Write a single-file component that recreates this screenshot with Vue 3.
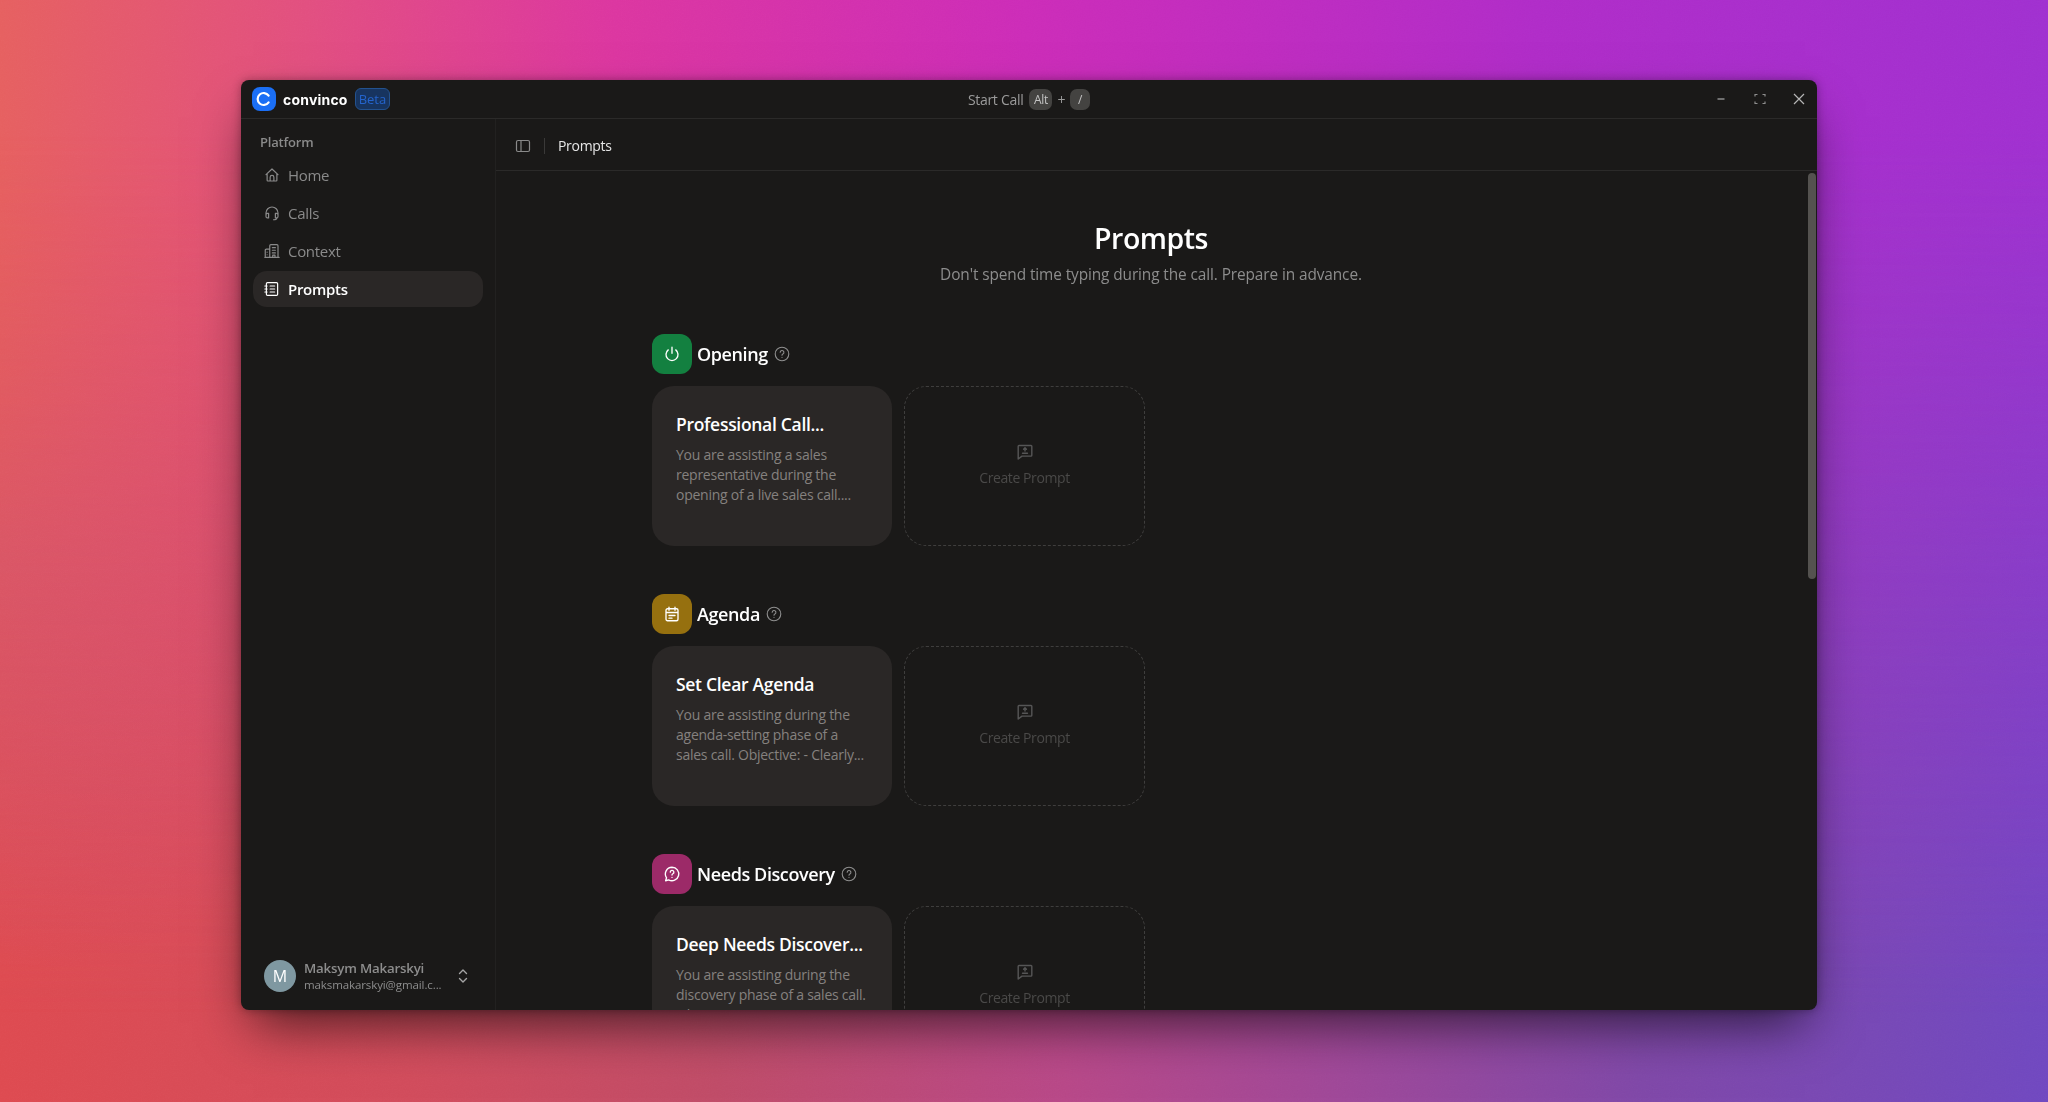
<template>
  <div class="desktop">
    <svg class="grain" width="2048" height="1102" aria-hidden="true">
      <filter id="grain-noise"><feTurbulence type="fractalNoise" baseFrequency="0.75" numOctaves="2" /><feColorMatrix type="saturate" values="0" /></filter>
      <rect width="2048" height="1102" filter="url(#grain-noise)" />
    </svg>
    <div class="window">
      <header class="titlebar">
        <div class="brand">
          <span class="logo">
            <svg width="16" height="16" viewBox="0 0 16 16" fill="none" stroke="#fff" stroke-width="2.2" stroke-linecap="round"><path d="M12.6 4.6A6 6 0 1 0 12.6 11.4" /></svg>
          </span>
          <span class="brand-name">convinco</span>
          <span class="beta">Beta</span>
        </div>
        <div class="start-call">
          <span>Start Call</span>
          <kbd class="alt">Alt</kbd>
          <span class="plus">+</span>
          <kbd class="slash">/</kbd>
        </div>
        <div class="controls">
          <svg width="12" height="12" viewBox="0 0 12 12" fill="none" stroke="#8d8d8d" stroke-width="1.3"><path d="M2.5 6h7" /></svg>
          <svg width="12" height="12" viewBox="0 0 12 12" fill="none" stroke="#8d8d8d" stroke-width="1.2"><path d="M1 3.5V1.5h2.5M8.5 1.5H11v2M11 8.5v2H8.500M3.500 10.500H1v-2" /></svg>
          <svg width="12" height="12" viewBox="0 0 12 12" fill="none" stroke="#b5b5b5" stroke-width="1.2"><path d="M1 1l10 10M11 1L1 11" /></svg>
        </div>
      </header>

      <div class="body">
        <aside class="sidebar">
          <div class="side-label">Platform</div>
          <nav class="nav">
            <a v-for="item in navItems" :key="item.name" class="nav-item" :class="{ active: item.active }">
              <svg width="18" height="18" viewBox="0 0 24 24" fill="none" stroke="currentColor" stroke-width="1.6" stroke-linecap="round" stroke-linejoin="round"><path :d="item.icon" /></svg>
              <span>{{ item.name }}</span>
            </a>
          </nav>
          <div class="user">
            <span class="avatar">M</span>
            <div class="user-text">
              <div class="user-name">Maksym Makarskyi</div>
              <div class="user-mail">maksmakarskyi@gmail.c...</div>
            </div>
            <svg width="14" height="16" viewBox="0 0 14 16" fill="none" stroke="#a5a5a5" stroke-width="1.4" stroke-linecap="round" stroke-linejoin="round"><path d="M3.500 5.500L7 2l3.500 3.500M3.500 10.500L7 14l3.500-3.500" /></svg>
          </div>
        </aside>

        <main class="main">
          <div class="crumbs">
            <svg width="16" height="16" viewBox="0 0 16 16" fill="none" stroke="#8a8a8a" stroke-width="1.2"><rect x="1.500" y="2.500" width="13" height="11" rx="1.500" /><path d="M6 2.500v11" /></svg>
            <span class="divider"></span>
            <span class="crumb">Prompts</span>
          </div>
          <div class="content">
            <h1>Prompts</h1>
            <p class="lead">Don't spend time typing during the call. Prepare in advance.</p>
            <section v-for="sec in sections" :key="sec.name" class="section">
              <div class="sec-head">
                <span class="sec-icon" :class="sec.tone">
                  <svg width="18" height="18" viewBox="0 0 24 24" fill="none" stroke="#fff" stroke-width="1.800" stroke-linecap="round" stroke-linejoin="round"><path :d="sec.icon" /></svg>
                </span>
                <span class="sec-name">{{ sec.name }}</span>
                <svg class="help" width="16" height="16" viewBox="0 0 16 16" fill="none" stroke="#8f8f8f" stroke-width="1.100" stroke-linecap="round"><circle cx="8" cy="8" r="6.800" /><path d="M6.200 6.300a1.850 1.850 0 1 1 2.700 1.650c-.6.300-.9.650-.9 1.250" /><path d="M8 11.300v.05" /></svg>
              </div>
              <div class="cards">
                <article class="card">
                  <h3>{{ sec.card }}</h3>
                  <p>{{ sec.text }}</p>
                </article>
                <button class="create">
                  <svg width="18" height="18" viewBox="0 0 18 18" fill="none" stroke="#565656" stroke-width="1.400" stroke-linecap="round" stroke-linejoin="round"><path d="M3 2.500h12a.8.8 0 0 1 .8.8v9a.8.8 0 0 1-.8.8H6L2.200 16V3.300a.8.8 0 0 1 .8-.8z" /><path d="M6.500 10.200h5M9 8V5M7.600 6.200L9 4.800l1.400 1.400" /></svg>
                  <span>Create Prompt</span>
                </button>
              </div>
            </section>
          </div>
          <div class="scroll-thumb"></div>
        </main>
      </div>
    </div>
  </div>
</template>

<script setup>
const navItems = [
  { name: 'Home', icon: 'M4 11.500L12 4l8 7.500M5.500 10v9a1 1 0 0 0 1 1h11a1 1 0 0 0 1-1v-9M9.500 20v-5a2.500 2.500 0 0 1 5 0v5' },
  { name: 'Calls', icon: 'M4 15v-3a8 8 0 0 1 16 0v3M4 14.500a2 2 0 0 1 2-2h1.500v6H6a2 2 0 0 1-2-2zM20 14.500a2 2 0 0 0-2-2h-1.500v6H18a2 2 0 0 0 2-2zM18.500 18.500c0 1.800-2 2.500-4.500 2.500' },
  { name: 'Context', icon: 'M9 20V5a1.500 1.500 0 0 1 1.500-1.500h8A1.500 1.500 0 0 1 20 5v15M3 20v-9a1.500 1.500 0 0 1 1.500-1.500H9M2.500 20.500h19M12.500 7.500h4M12.500 11h4M12.500 14.500h4M13 20v-2.500h3V20M5.500 13.500v.01M5.500 17v.01' },
  { name: 'Prompts', active: true, icon: 'M6 3.500h12a1.500 1.500 0 0 1 1.500 1.500v14a1.500 1.500 0 0 1-1.500 1.500H6A1.500 1.500 0 0 1 4.500 19V5A1.500 1.500 0 0 1 6 3.500zM2.500 8h3M2.500 12h3M2.500 16h3M9.500 8h6M9.500 12h6M9.500 16h6' },
]

const sections = [
  {
    name: 'Opening',
    tone: 'green',
    icon: 'M12 3v8M7 6.500a8 8 0 1 0 10 0',
    card: 'Professional Call...',
    text: 'You are assisting a sales representative during the opening of a live sales call....',
  },
  {
    name: 'Agenda',
    tone: 'gold',
    icon: 'M6 5h12a2 2 0 0 1 2 2v12a2 2 0 0 1-2 2H6a2 2 0 0 1-2-2V7a2 2 0 0 1 2-2zM8 3v4M16 3v4M4 10h16M8 14h8M8 17.500h4',
    card: 'Set Clear Agenda',
    text: 'You are assisting during the agenda-setting phase of a sales call. Objective: - Clearly...',
  },
  {
    name: 'Needs Discovery',
    tone: 'berry',
    icon: 'M12 3a9 9 0 1 1-4.500 16.800L3.500 21l1.200-4A9 9 0 0 1 12 3zM9.700 9.500a2.400 2.400 0 1 1 3.500 2.200c-.8.400-1.200.9-1.200 1.700M12 16.500v.01',
    card: 'Deep Needs Discover...',
    text: 'You are assisting during the discovery phase of a sales call. Objective: - Uncover...',
  },
]
</script>

<style>
html,
body {
  margin: 0;
  height: 100%;
  overflow: hidden;
}
</style>

<style scoped>
.desktop {
  position: relative;
  box-sizing: border-box;
  width: 2048px;
  height: 1102px;
  padding: 80px 231px 92px 241px;
  overflow: hidden;
  font-family: "Open Sans", "Noto Sans", sans-serif;
  background:
    radial-gradient(420px 420px at 0% 50%, rgba(200, 76, 116, 0.75) 0%, rgba(200, 76, 116, 0) 100%),
    linear-gradient(90deg, #de4a50 0%, #d24c5c 20%, #c04c68 35%, #b84888 52%, #a04898 65%, #8048a8 80%, #7048c0 100%);
}

/* top row of the wallpaper, faded out downwards over the bottom row */
.desktop::before {
  content: "";
  position: absolute;
  inset: 0;
  background: linear-gradient(90deg, #e66060 0%, #e24f80 15%, #dc36a0 30%, #cc2cb8 50%, #b02cc8 75%, #a030d0 100%);
  -webkit-mask-image: linear-gradient(180deg, #000 0%, #000 12%, transparent 92%);
  mask-image: linear-gradient(180deg, #000 0%, #000 12%, transparent 92%);
}

.grain {
  position: absolute;
  top: 0;
  left: 0;
  opacity: 0.1;
  mix-blend-mode: soft-light;
}

.window {
  position: relative;
  display: flex;
  flex-direction: column;
  height: 100%;
  border-radius: 8px;
  overflow: hidden;
  background: #1a1918;
  box-shadow: 0 25px 50px -12px rgba(0, 0, 0, 0.65), 0 0 10px rgba(0, 0, 0, 0.3);
}

.titlebar {
  display: grid;
  grid-template-columns: 1fr auto 1fr;
  align-items: center;
  height: 38px;
  flex: none;
  padding: 0 11px;
  border-bottom: 1px solid #2b2a29;
}

.brand {
  display: flex;
  align-items: center;
}

.logo {
  display: flex;
  align-items: center;
  justify-content: center;
  width: 24px;
  height: 24px;
  border-radius: 8px;
  background: #1b6ff5;
}

.brand-name {
  margin-left: 7px;
  font-family: Inter, sans-serif;
  font-size: 14px;
  font-weight: 700;
  letter-spacing: 0.2px;
  color: #fff;
}

.beta {
  margin-left: 7px;
  padding: 0 3px;
  height: 20px;
  line-height: 21px;
  font-size: 13px;
  color: #2464cc;
  background: #17345f;
  border: 1px solid #23528f;
  border-radius: 6px;
}

.start-call {
  display: flex;
  align-items: center;
  font-size: 14px;
  letter-spacing: -0.3px;
  color: #9b9b9b;
}

kbd {
  display: flex;
  align-items: center;
  justify-content: center;
  height: 21px;
  border-radius: 7px;
  background: #444341;
  color: #c4c4c4;
  font-family: inherit;
  font-size: 12px;
}

.alt {
  width: 23px;
  margin-left: 6px;
}

.plus {
  margin: 0 5px;
}

.slash {
  width: 20px;
}

.controls {
  display: flex;
  justify-content: flex-end;
  gap: 27px;
  padding-right: 1px;
}

.body {
  display: flex;
  flex: 1;
  min-height: 0;
}

.sidebar {
  display: flex;
  flex-direction: column;
  width: 255px;
  flex: none;
  box-sizing: border-box;
  padding: 14px 12px 18px;
  border-right: 1px solid #222120;
}

.side-label {
  padding-left: 7px;
  font-size: 13px;
  font-weight: 600;
  letter-spacing: -0.2px;
  color: #8a8a8a;
}

.nav {
  display: flex;
  flex-direction: column;
  gap: 2px;
  margin-top: 6px;
}

.nav-item {
  display: flex;
  align-items: center;
  gap: 7px;
  height: 36px;
  padding-left: 10px;
  border-radius: 14px;
  font-size: 15px;
  letter-spacing: -0.3px;
  color: #8a8a8a;
}

.nav-item.active {
  background: #2a2726;
  color: #fff;
  font-weight: 600;
}

.user {
  display: flex;
  align-items: center;
  margin-top: auto;
  padding-left: 11px;
}

.avatar {
  display: flex;
  align-items: center;
  justify-content: center;
  width: 32px;
  height: 32px;
  flex: none;
  border-radius: 50%;
  background: #7f98a1;
  color: #fff;
  font-size: 16px;
}

.user-text {
  width: 149px;
  margin-left: 8px;
  margin-right: 3px;
}

.user-name {
  font-size: 13.3px;
  line-height: 17px;
  font-weight: 600;
  letter-spacing: -0.2px;
  color: #8d8d8d;
}

.user-mail {
  font-size: 11.5px;
  line-height: 15px;
  letter-spacing: -0.1px;
  white-space: nowrap;
  color: #8d8d8d;
}

.main {
  position: relative;
  flex: 1;
  min-width: 0;
  overflow: hidden;
}

.crumbs {
  display: flex;
  align-items: center;
  gap: 13px;
  box-sizing: content-box;
  height: 49px;
  padding: 2px 0 0 19px;
  border-bottom: 1px solid #2b2a29;
}

.divider {
  width: 1px;
  height: 16px;
  background: #3a3938;
}

.crumb {
  font-size: 14px;
  letter-spacing: -0.3px;
  color: #e6e6e6;
}

.content {
  box-sizing: border-box;
  width: 998px;
  margin-left: 156px;
  padding-top: 47px;
}

h1 {
  margin: 0;
  text-align: center;
  font-size: 28.5px;
  line-height: 40px;
  font-weight: 600;
  letter-spacing: -0.5px;
  color: #fff;
}

.lead {
  margin: 6px 0 0;
  text-align: center;
  font-size: 15.4px;
  line-height: 22px;
  letter-spacing: -0.1px;
  color: #8d8d8d;
}

.section {
  margin-bottom: 48px;
}

.lead + .section {
  margin-top: 48px;
}

.sec-head {
  display: flex;
  align-items: center;
  height: 40px;
}

.sec-icon {
  display: flex;
  align-items: center;
  justify-content: center;
  width: 40px;
  height: 40px;
  border-radius: 12px;
}

.green {
  background: #138040;
}

.gold {
  background: #96700f;
}

.berry {
  background: #9c2a68;
}

.sec-name {
  margin-left: 5px;
  font-size: 18px;
  font-weight: 600;
  letter-spacing: -0.4px;
  color: #fff;
}

.help {
  margin-left: 6px;
}

.cards {
  display: flex;
  gap: 12px;
  margin-top: 12px;
}

.card {
  box-sizing: border-box;
  width: 240px;
  height: 160px;
  padding: 26px 24px 0;
  border-radius: 22px;
  background: #2a2726;
}

.card h3 {
  margin: 0;
  font-size: 17.5px;
  line-height: 24px;
  font-weight: 600;
  letter-spacing: -0.3px;
  white-space: nowrap;
  color: #fff;
}

.card p {
  margin: 9px 0 0;
  font-size: 14px;
  line-height: 20px;
  letter-spacing: -0.25px;
  color: #85817f;
}

.create {
  display: flex;
  flex-direction: column;
  align-items: center;
  justify-content: center;
  gap: 7px;
  box-sizing: border-box;
  width: 241px;
  height: 160px;
  padding: 0 0 2px;
  border: 1px dashed #3f3e3d;
  border-radius: 22px;
  background: none;
  font-family: inherit;
  font-size: 14px;
  letter-spacing: -0.4px;
  color: #4a4948;
}

.scroll-thumb {
  position: absolute;
  top: 54px;
  right: 1px;
  width: 8px;
  height: 406px;
  border-radius: 4px;
  background: #54524f;
}
</style>
